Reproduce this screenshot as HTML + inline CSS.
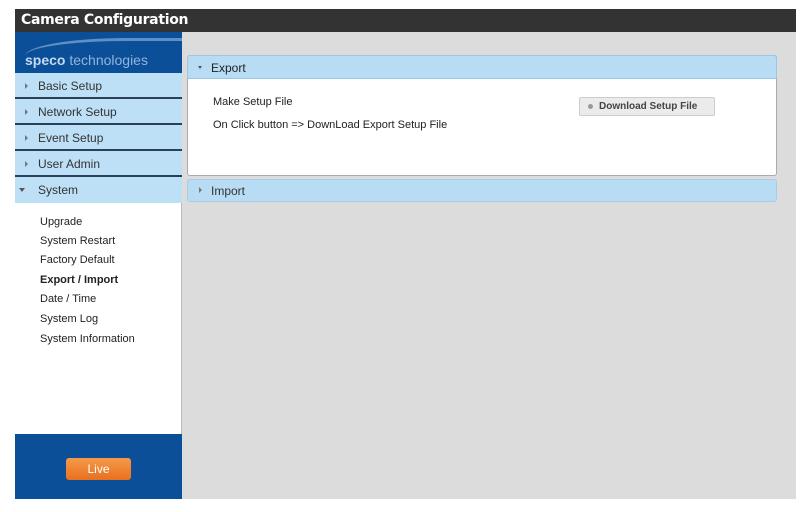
<!DOCTYPE html>
<html><head><style>
body{margin:0;width:812px;height:512px;background:#fff;font-family:"Liberation Sans",sans-serif;position:relative;overflow:hidden}
div{position:absolute;box-sizing:border-box;white-space:nowrap}
.t{font-size:11px;color:#222}
.mi{left:15px;width:167px;height:26px;background:#bde0f6;border-bottom:2px solid #2a3f5a;font-size:12px;color:#333;padding:6px 0 0 23px}
.ar:before{content:"";position:absolute;left:10px;top:10px;border-left:3px solid #777;border-top:3px solid transparent;border-bottom:3px solid transparent}
.sub{left:40px;font-size:11px;color:#222}
</style></head><body>
<div style="left:15px;top:9px;width:781px;height:23px;background:#333;color:#fff;font-weight:bold;font-size:14px;padding:3px 0 0 6px;font-family:'DejaVu Sans',sans-serif;letter-spacing:-0.3px">Camera Configuration</div>
<div style="left:182px;top:32px;width:614px;height:467px;background:#dcdcdc"></div>
<div style="left:15px;top:32px;width:167px;height:41px;background:#0b4f98;overflow:hidden">
<div style="left:10px;top:6px;width:170px;height:30px;border-top:3px solid #5f8fc4;border-radius:60% 0 0 0"></div>
<div style="left:10px;top:20px;font-size:14px;color:#8fb5dc"><b style="color:#c5d8ee">speco</b> technologies</div></div>
<div class="mi ar" style="top:73px">Basic Setup</div>
<div class="mi ar" style="top:99px">Network Setup</div>
<div class="mi ar" style="top:125px">Event Setup</div>
<div class="mi ar" style="top:151px">User Admin</div>
<div class="mi" style="top:177px;border-bottom:none">System</div>
<div style="left:19px;top:188px;border-top:4px solid #555;border-left:3px solid transparent;border-right:3px solid transparent"></div>
<div style="left:15px;top:203px;width:167px;height:231px;background:#fff;border-right:1px solid #bbb"></div>
<div class="sub" style="top:216px">Upgrade</div>
<div class="sub" style="top:235px">System Restart</div>
<div class="sub" style="top:254px">Factory Default</div>
<div class="sub" style="top:274px;font-weight:bold">Export / Import</div>
<div class="sub" style="top:293px">Date / Time</div>
<div class="sub" style="top:313px">System Log</div>
<div class="sub" style="top:333px">System Information</div>
<div style="left:15px;top:434px;width:167px;height:65px;background:#0b4f98"></div>
<div style="left:66px;top:458px;width:65px;height:22px;background:linear-gradient(#f59a4a,#e8701e);border-radius:3px;color:#fff;font-size:12px;text-align:center;padding-top:4px">Live</div>
<div style="left:187px;top:55px;width:590px;height:121px;background:#fff;border:1px solid #aaa;border-radius:3px"></div>
<div style="left:187px;top:55px;width:590px;height:24px;background:#b8dcf4;border:1px solid #9cc6e4;border-radius:3px 3px 0 0;font-size:12px;color:#222;padding:5px 0 0 23px">Export</div>
<div style="left:198px;top:66px;border-top:3px solid #555;border-left:2px solid transparent;border-right:2px solid transparent"></div>
<div class="t" style="left:213px;top:96px;font-size:11px">Make Setup File</div>
<div class="t" style="left:213px;top:119px;font-size:11px">On Click button =&gt; DownLoad Export Setup File</div>
<div style="left:579px;top:97px;width:136px;height:19px;background:#ebebeb;border:1px solid #ccc;border-radius:2px;font-size:10px;font-weight:bold;color:#444;padding:3px 0 0 19px">Download Setup File</div>
<div style="left:588px;top:104px;width:5px;height:5px;border-radius:50%;background:#999"></div>
<div style="left:187px;top:179px;width:590px;height:23px;background:#b8dcf4;border:1px solid #a6cde8;border-radius:3px;font-size:12px;color:#333;padding:4px 0 0 23px">Import</div>
<div style="left:199px;top:187px;border-left:3px solid #777;border-top:3px solid transparent;border-bottom:3px solid transparent"></div>
</body></html>
